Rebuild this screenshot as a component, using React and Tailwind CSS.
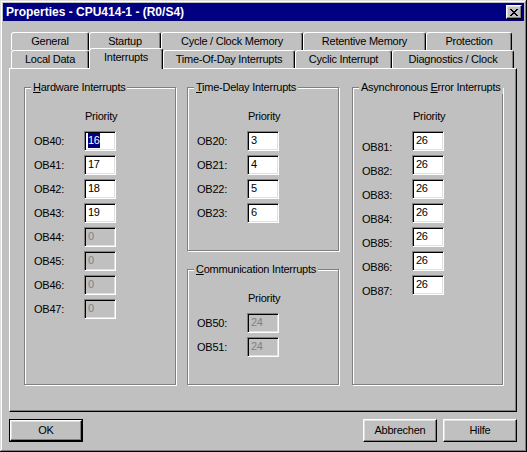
import React from "react";

const FONT = "font-['Liberation_Sans',Arial,sans-serif]";

function CloseGlyph() {
  const px = [
    [0, 0], [1, 0], [6, 0], [7, 0],
    [1, 1], [2, 1], [5, 1], [6, 1],
    [2, 2], [3, 2], [4, 2], [5, 2],
    [3, 3], [4, 3],
    [2, 4], [3, 4], [4, 4], [5, 4],
    [1, 5], [2, 5], [5, 5], [6, 5],
    [0, 6], [1, 6], [6, 6], [7, 6],
  ];
  return (
    <svg width="8" height="7" viewBox="0 0 8 7" shapeRendering="crispEdges">
      {px.map(([x, y], i) => (
        <rect key={i} x={x} y={y} width="1" height="1" fill="#000" />
      ))}
    </svg>
  );
}

function Tab({ label, w, selected }) {
  if (selected) {
    return (
      <div
        className={`relative z-10 ${w} h-[21px] -mb-[1px] bg-[#c0c0c0] border-t border-l border-r border-t-white border-l-white border-r-black rounded-tl-[3px] rounded-tr-[3px] shadow-[inset_-1px_0_#808080] flex items-center justify-center pb-[4px] text-[11px] text-black`}
      >
        {label}
      </div>
    );
  }
  return (
    <div
      className={`${w} h-[18px] bg-[#c0c0c0] border-t border-l border-r border-t-white border-l-white border-r-black rounded-tl-[3px] rounded-tr-[3px] shadow-[inset_-1px_0_#808080] flex items-center justify-center text-[11px] text-black`}
    >
      {label}
    </div>
  );
}

function Field({ value, disabled, selected }) {
  return (
    <div
      className={`w-[32px] h-[20px] border border-t-[#808080] border-l-[#808080] border-b-white border-r-white shadow-[inset_1px_1px_#000,inset_-1px_-1px_#dfdfdf] pl-[3px] pt-[1px] text-[11px] leading-[15px] ${
        disabled ? "bg-[#c0c0c0] text-[#808080]" : "bg-white text-black"
      }`}
    >
      {selected ? (
        <span className="inline-block bg-[#000080] text-white h-[15px] leading-[15px]">{value}</span>
      ) : (
        value
      )}
    </div>
  );
}

function Row({ label, value, disabled, selected, lowLabel }) {
  return (
    <div className="flex items-center h-[20px]">
      <span className={`w-[50px] text-[11px] leading-[13px] text-black ${lowLabel ? "pt-[12px]" : ""}`}>{label}</span>
      <Field value={value} disabled={disabled} selected={selected} />
    </div>
  );
}

function Group({ title, className, children }) {
  return (
    <div
      className={`relative border border-[#808080] shadow-[inset_1px_1px_#fff,1px_1px_#fff] ${className}`}
    >
      <div className="absolute -top-[7px] left-[6px] bg-[#c0c0c0] px-[2px] text-[11px] leading-[13px] text-black whitespace-nowrap">
        {title}
      </div>
      <div className="pl-[9px] pt-[22px]">
        <div className="pl-[51px] text-[11px] leading-[13px] text-black mb-[8px]">Priority</div>
        <div className="flex flex-col gap-[4px]">{children}</div>
      </div>
    </div>
  );
}

function Button({ label, isDefault }) {
  const inner = (
    <div className="w-full h-full bg-[#c0c0c0] border border-t-white border-l-white border-r-black border-b-black shadow-[inset_-1px_-1px_#808080,inset_1px_1px_#dfdfdf] flex items-center justify-center text-[11px] text-black">
      {label}
    </div>
  );
  if (isDefault) {
    return <div className="w-[74px] h-[23px] border border-black">{inner}</div>;
  }
  return <div className="w-[74px] h-[23px]">{inner}</div>;
}

export default function App() {
  return (
    <div
      className={`${FONT} tracking-[-0.25px] w-[527px] h-[452px] bg-[#c0c0c0] p-[3px] flex flex-col shadow-[inset_-1px_-1px_#000,inset_1px_1px_#dfdfdf,inset_-2px_-2px_#808080,inset_2px_2px_#fff] overflow-hidden`}
    >
      {/* Title bar */}
      <div className="h-[18px] bg-[#000080] flex items-center justify-between pl-[3px] pr-[2px]">
        <span className="text-white font-bold text-[12px] leading-[14px] tracking-normal whitespace-nowrap">
          Properties - CPU414-1 - (R0/S4)
        </span>
        <div className="w-[16px] h-[14px] bg-[#c0c0c0] border border-t-white border-l-white border-r-black border-b-black shadow-[inset_-1px_-1px_#808080,inset_1px_1px_#dfdfdf] flex items-center justify-center">
          <CloseGlyph />
        </div>
      </div>

      {/* Tabs */}
      <div className="mt-[11px] ml-[8px] flex flex-col">
        <div className="flex h-[18px]">
          <Tab label="General" w="w-[78px]" />
          <Tab label="Startup" w="w-[72px]" />
          <Tab label="Cycle / Clock Memory" w="w-[142px]" />
          <Tab label="Retentive Memory" w="w-[123px]" />
          <Tab label="Protection" w="w-[86px]" />
        </div>
        <div className="flex h-[18px] items-end">
          <Tab label="Local Data" w="w-[78px]" />
          <Tab label="Interrupts" w="w-[74px]" selected />
          <Tab label="Time-Of-Day Interrupts" w="w-[132px]" />
          <Tab label="Cyclic Interrupt" w="w-[97px]" />
          <Tab label="Diagnostics / Clock" w="w-[122px]" />
        </div>
      </div>

      {/* Panel */}
      <div className="ml-[6px] w-[508px] h-[344px] border border-t-white border-l-white border-r-black border-b-black shadow-[inset_-1px_-1px_#808080] pl-[14px] pt-[18px] flex">
        <Group
          className="w-[152px] h-[298px]"
          title={
            <>
              <span className="underline">H</span>ardware Interrupts
            </>
          }
        >
          <Row label="OB40:" value="16" selected />
          <Row label="OB41:" value="17" />
          <Row label="OB42:" value="18" />
          <Row label="OB43:" value="19" />
          <Row label="OB44:" value="0" disabled />
          <Row label="OB45:" value="0" disabled />
          <Row label="OB46:" value="0" disabled />
          <Row label="OB47:" value="0" disabled />
        </Group>

        <div className="ml-[11px] flex flex-col">
          <Group
            className="w-[152px] h-[164px]"
            title={
              <>
                <span className="underline">T</span>ime-Delay Interrupts
              </>
            }
          >
            <Row label="OB20:" value="3" />
            <Row label="OB21:" value="4" />
            <Row label="OB22:" value="5" />
            <Row label="OB23:" value="6" />
          </Group>
          <Group
            className="mt-[18px] w-[152px] h-[116px]"
            title={
              <>
                <span className="underline">C</span>ommunication Interrupts
              </>
            }
          >
            <Row label="OB50:" value="24" disabled />
            <Row label="OB51:" value="24" disabled />
          </Group>
        </div>

        <Group
          className="ml-[13px] w-[151px] h-[298px]"
          title={
            <>
              Asynchronous <span className="underline">E</span>rror Interrupts
            </>
          }
        >
          <Row label="OB81:" value="26" lowLabel />
          <Row label="OB82:" value="26" lowLabel />
          <Row label="OB83:" value="26" lowLabel />
          <Row label="OB84:" value="26" lowLabel />
          <Row label="OB85:" value="26" lowLabel />
          <Row label="OB86:" value="26" lowLabel />
          <Row label="OB87:" value="26" lowLabel />
        </Group>
      </div>

      {/* Buttons */}
      <div className="ml-[6px] w-[508px] mt-[7px] flex justify-between">
        <Button label="OK" isDefault />
        <div className="flex gap-[6px]">
          <Button label="Abbrechen" />
          <Button label="Hilfe" />
        </div>
      </div>
    </div>
  );
}
